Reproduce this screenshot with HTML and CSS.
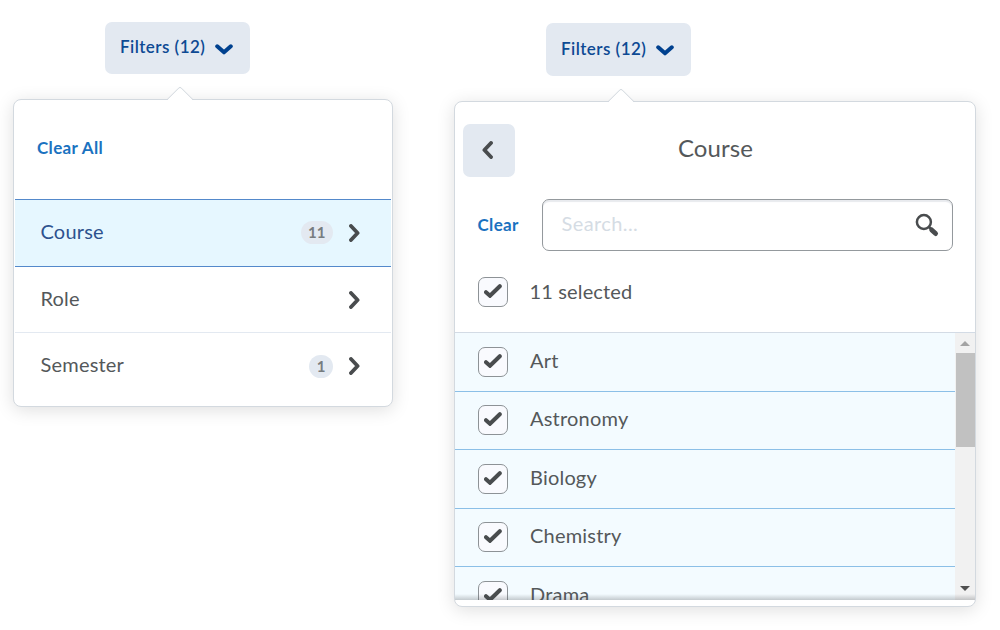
FILE: index.html
```html
<!DOCTYPE html>
<html lang="en">
<head>
<meta charset="utf-8">
<title>Filters</title>
<link rel="stylesheet" href="styles.css">
</head>
<body>
<svg class="defs" width="0" height="0">
  <symbol id="chevron" viewBox="0 0 11 18"><path d="M2 2 L8.6 9 L2 16"/></symbol>
  <symbol id="check" viewBox="0 0 18 14"><path d="M2 8.2 L6 11.8 L15.8 2.2"/></symbol>
</svg>
<main class="page">
  <section class="filter filter-left">
    <button class="opener"><span>Filters (12)</span><svg class="down" viewBox="0 0 18 11"><path d="M2.2 2.3 L9 8.3 L15.8 2.3"/></svg></button>
    <div class="panel">
      <div class="pointer"></div>
      <div class="clear-all"><a class="link">Clear All</a></div>
      <ul class="dimensions">
        <li class="dimension active"><span class="name">Course</span><span class="count">11</span><svg class="chevron"><use href="#chevron"/></svg></li>
        <li class="dimension"><span class="name">Role</span><svg class="chevron"><use href="#chevron"/></svg></li>
        <li class="dimension"><span class="name">Semester</span><span class="count">1</span><svg class="chevron"><use href="#chevron"/></svg></li>
      </ul>
    </div>
  </section>
  <section class="filter filter-right">
    <button class="opener"><span>Filters (12)</span><svg class="down" viewBox="0 0 18 11"><path d="M2.2 2.3 L9 8.3 L15.8 2.3"/></svg></button>
    <div class="panel">
      <div class="pointer"></div>
      <header class="header">
        <button class="back"><svg class="chevron back-icon"><use href="#chevron"/></svg></button>
        <h2 class="title">Course</h2>
      </header>
      <div class="search-row">
        <a class="link">Clear</a>
        <div class="search"><span class="placeholder">Search...</span>
          <svg class="magnifier" viewBox="0 0 24 24"><circle cx="8.9" cy="9" r="7"/><path class="neck" d="M14 14 L16 16"/><path class="handle" d="M16.7 16.9 L20.6 20.6"/></svg>
        </div>
      </div>
      <div class="select-all"><span class="checkbox"><svg class="check"><use href="#check"/></svg></span><span>11 selected</span></div>
      <div class="list">
        <ul class="options">
          <li class="option"><span class="checkbox"><svg class="check"><use href="#check"/></svg></span><span>Art</span></li>
          <li class="option"><span class="checkbox"><svg class="check"><use href="#check"/></svg></span><span>Astronomy</span></li>
          <li class="option"><span class="checkbox"><svg class="check"><use href="#check"/></svg></span><span>Biology</span></li>
          <li class="option"><span class="checkbox"><svg class="check"><use href="#check"/></svg></span><span>Chemistry</span></li>
          <li class="option"><span class="checkbox"><svg class="check"><use href="#check"/></svg></span><span>Drama</span></li>
        </ul>
        <div class="scrollbar"><svg class="arrow arrow-up" viewBox="0 0 10 5"><path d="M0 5 L5 0 L10 5Z"/></svg><div class="thumb"></div><svg class="arrow arrow-down" viewBox="0 0 10 5"><path d="M0 0 L5 5 L10 0Z"/></svg></div>
        <div class="fade"></div>
      </div>
    </div>
  </section>
</main>
</body>
</html>
```
FILE: styles.css
```css
* { box-sizing: border-box; }
body { margin: 0; background: #fff; font-family: Lato, "Liberation Sans", sans-serif; color: #54585a; overflow: hidden; }
ul { list-style: none; margin: 0; padding: 0; }
svg { fill: none; stroke: #494c4e; flex: none; }
.defs { position: absolute; }
.page { display: flex; width: 1000px; height: 630px; padding-left: 13px; gap: 61px; }
.filter { display: flex; flex-direction: column; align-items: flex-start; }
.filter-left { width: 380px; padding-top: 21.5px; }
.filter-right { width: 522px; padding-top: 23px; }
.opener { display: flex; align-items: center; gap: 10px; width: 145px; height: 52.5px; margin: 0 0 25px 92px; padding: 0 0 1px 15px; border: 0; border-radius: 7px; background: #e3e9f1; color: #0d4a94; font: 600 17px/24px Lato, sans-serif; letter-spacing: 0.45px; white-space: nowrap; }
.down { width: 18px; height: 11px; margin-top: 4px; stroke: #00418f; stroke-width: 4; stroke-linecap: round; stroke-linejoin: round; }
.panel { position: relative; width: 100%; border: 1.5px solid #d3d9df; border-radius: 8px; background: #fff; box-shadow: 0 3px 18px rgba(0, 0, 0, 0.13); }
.filter-left .panel { height: 308px; }
.filter-right .panel { height: 506.5px; }
.pointer { position: absolute; left: 156px; top: -10px; width: 20px; height: 20px; transform: rotate(45deg); border: 1.5px solid #d3d9df; border-right-color: transparent; border-bottom-color: transparent; border-radius: 3px 0 0 0; background: linear-gradient(135deg, #fff 50%, transparent 50%); }
.link { color: #1a72c0; font-size: 17px; font-weight: 700; letter-spacing: 0.35px; }
.clear-all { display: flex; align-items: center; height: 98.5px; padding: 0 0 3px 23px; }
.dimensions { padding: 0 1px; }
.dimension { display: flex; align-items: center; height: 66px; padding: 0 31px 0 25.5px; border-bottom: 1px solid #e3e9f1; font-size: 20px; letter-spacing: 0.2px; }
.dimension:last-child { border: 0; }
.dimension.active { height: 68.5px; background: #e6f7ff; border-top: 1.5px solid #5489cb; border-bottom: 1px solid #5489cb; color: #2d528e; }
.name { flex: 1; padding-bottom: 4px; }
.count { min-width: 24px; height: 23px; padding: 0 7.5px; border-radius: 12px; background: #e3e9f1; color: #777c7f; font-size: 15px; font-weight: 700; line-height: 22px; text-align: center; letter-spacing: 0; }
.chevron { width: 11px; height: 18px; margin-left: 16px; stroke-width: 3.8; stroke-linecap: round; stroke-linejoin: round; }
.header { display: flex; align-items: center; padding: 22px 8px 0 7.5px; }
.back { display: flex; align-items: center; justify-content: center; width: 52.5px; height: 53px; padding: 0 2px 0 0; border: 0; border-radius: 7px; background: #e3e9f1; }
.back-icon { margin: 0; transform: scaleX(-1); }
.title { flex: 1; margin: 0; padding: 0 51px 5px 0; text-align: center; font-size: 24px; font-weight: 400; letter-spacing: 0.1px; }
.search-row { display: flex; align-items: center; justify-content: space-between; padding: 22px 22px 0 22.5px; }
.search { display: flex; align-items: center; justify-content: space-between; width: 411.5px; height: 52.5px; padding: 0 13px 0 19px; border: 1px solid #94999d; border-radius: 7px; box-shadow: inset 0 2px 1px #e8eaee; font-size: 20px; letter-spacing: 0.4px; color: #d5dce4; }
.search-row .link { padding-bottom: 1px; }
.placeholder { padding-bottom: 3px; }
.magnifier { width: 24px; height: 24px; margin-top: 1px; stroke-width: 2.5; }
.magnifier .handle { stroke-width: 4.8; stroke-linecap: round; }
.select-all { display: flex; align-items: center; gap: 22px; height: 81px; padding-left: 22.5px; font-size: 20px; letter-spacing: 0.15px; }
.select-all > span:last-child { padding-bottom: 1px; }
.checkbox { display: flex; align-items: center; justify-content: center; width: 30px; height: 30px; border: 1px solid #8d9296; border-radius: 7px; background: #f9fafe; }
.check { width: 18px; height: 14px; margin-bottom: 2px; stroke-width: 4; stroke-linecap: round; }
.list { position: relative; display: flex; height: 268px; overflow: hidden; border-top: 1.5px solid #d3dbe5; }
.options { flex: 1; }
.option { display: flex; align-items: center; gap: 22.5px; height: 58.5px; padding-left: 22.5px; border-bottom: 1.5px solid #8bbfe7; background: #f3fbff; font-size: 20px; letter-spacing: 0.2px; }
.option > span:last-child { padding-bottom: 4.5px; }
.scrollbar { display: flex; flex-direction: column; align-items: center; width: 20px; background: #f1f1f1; }
.arrow { width: 10px; height: 5px; stroke: none; }
.arrow-up { margin: 8px 0 7px; fill: #a3a3a3; }
.thumb { width: 19px; height: 94px; background: #c1c1c1; }
.arrow-down { margin: auto 0 9px; fill: #505050; }
.fade { position: absolute; inset: auto 0 0; height: 6px; background: linear-gradient(transparent, rgba(70, 75, 80, 0.28)); }
```
